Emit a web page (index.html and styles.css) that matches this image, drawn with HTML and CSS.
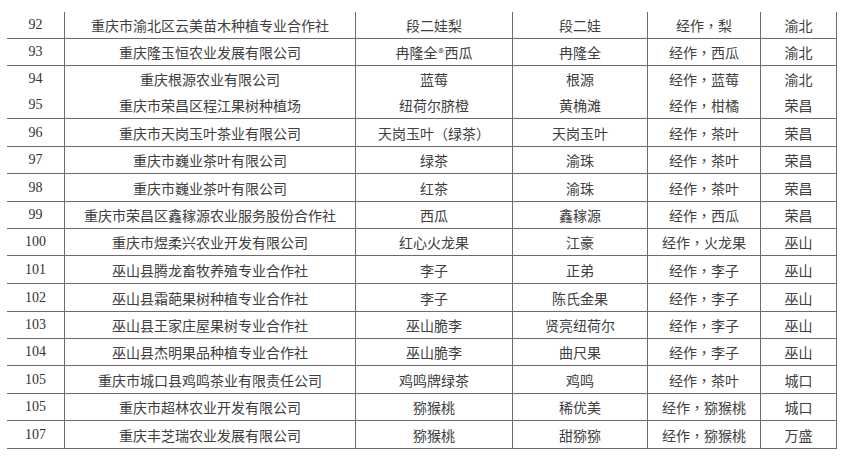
FILE: index.html
```html
<!DOCTYPE html>
<html lang="zh-CN">
<head>
<meta charset="utf-8">
<title>重庆市农产品品牌名录</title>
<link rel="stylesheet" href="styles.css">
</head>
<body>
<div class="sheet">
  <div class="row h27"><div class="c num">92</div><div class="c">重庆市渝北区云美苗木种植专业合作社</div><div class="c">段二娃梨</div><div class="c">段二娃</div><div class="c cat" lang="zh-Hant">经作，梨</div><div class="c">渝北</div></div>
  <div class="row h27"><div class="c num">93</div><div class="c">重庆隆玉恒农业发展有限公司</div><div class="c">冉隆全<span class="mark">®</span>西瓜</div><div class="c">冉隆全</div><div class="c cat" lang="zh-Hant">经作，西瓜</div><div class="c">渝北</div></div>
  <div class="row h26 nob"><div class="c num">94</div><div class="c">重庆根源农业有限公司</div><div class="c">蓝莓</div><div class="c">根源</div><div class="c cat" lang="zh-Hant">经作，蓝莓</div><div class="c">渝北</div></div>
  <div class="row h27"><div class="c num">95</div><div class="c">重庆市荣昌区程江果树种植场</div><div class="c">纽荷尔脐橙</div><div class="c">黄桷滩</div><div class="c cat" lang="zh-Hant">经作，柑橘</div><div class="c">荣昌</div></div>
  <div class="row h28"><div class="c num">96</div><div class="c">重庆市天岗玉叶茶业有限公司</div><div class="c">天岗玉叶（绿茶）</div><div class="c">天岗玉叶</div><div class="c cat" lang="zh-Hant">经作，茶叶</div><div class="c">荣昌</div></div>
  <div class="row h27"><div class="c num">97</div><div class="c">重庆市巍业茶叶有限公司</div><div class="c">绿茶</div><div class="c">渝珠</div><div class="c cat" lang="zh-Hant">经作，茶叶</div><div class="c">荣昌</div></div>
  <div class="row h28"><div class="c num">98</div><div class="c">重庆市巍业茶叶有限公司</div><div class="c">红茶</div><div class="c">渝珠</div><div class="c cat" lang="zh-Hant">经作，茶叶</div><div class="c">荣昌</div></div>
  <div class="row h27"><div class="c num">99</div><div class="c">重庆市荣昌区鑫稼源农业服务股份合作社</div><div class="c">西瓜</div><div class="c">鑫稼源</div><div class="c cat" lang="zh-Hant">经作，西瓜</div><div class="c">荣昌</div></div>
  <div class="row h27"><div class="c num">100</div><div class="c">重庆市煜柔兴农业开发有限公司</div><div class="c">红心火龙果</div><div class="c">江豪</div><div class="c cat" lang="zh-Hant">经作，火龙果</div><div class="c">巫山</div></div>
  <div class="row h28"><div class="c num">101</div><div class="c">巫山县腾龙畜牧养殖专业合作社</div><div class="c">李子</div><div class="c">正弟</div><div class="c cat" lang="zh-Hant">经作，李子</div><div class="c">巫山</div></div>
  <div class="row h28"><div class="c num">102</div><div class="c">巫山县霜葩果树种植专业合作社</div><div class="c">李子</div><div class="c">陈氏金果</div><div class="c cat" lang="zh-Hant">经作，李子</div><div class="c">巫山</div></div>
  <div class="row h27"><div class="c num">103</div><div class="c">巫山县王家庄屋果树专业合作社</div><div class="c">巫山脆李</div><div class="c">贤亮纽荷尔</div><div class="c cat" lang="zh-Hant">经作，李子</div><div class="c">巫山</div></div>
  <div class="row h27"><div class="c num">104</div><div class="c">巫山县杰明果品种植专业合作社</div><div class="c">巫山脆李</div><div class="c">曲尺果</div><div class="c cat" lang="zh-Hant">经作，李子</div><div class="c">巫山</div></div>
  <div class="row h28"><div class="c num">105</div><div class="c">重庆市城口县鸡鸣茶业有限责任公司</div><div class="c">鸡鸣牌绿茶</div><div class="c">鸡鸣</div><div class="c cat" lang="zh-Hant">经作，茶叶</div><div class="c">城口</div></div>
  <div class="row h27"><div class="c num">105</div><div class="c">重庆市超林农业开发有限公司</div><div class="c">猕猴桃</div><div class="c">稀优美</div><div class="c cat" lang="zh-Hant">经作，猕猴桃</div><div class="c">城口</div></div>
  <div class="row h28"><div class="c num">107</div><div class="c">重庆丰芝瑞农业发展有限公司</div><div class="c">猕猴桃</div><div class="c">甜猕猕</div><div class="c cat" lang="zh-Hant">经作，猕猴桃</div><div class="c">万盛</div></div>
</div>
</body>
</html>
```

FILE: styles.css
```css
html, body {
  margin: 0;
  padding: 0;
  background: #ffffff;
}

body {
  font-family: "Noto Sans CJK SC", "Noto Sans", sans-serif;
  font-size: 14px;
  color: #404040;
}

.sheet {
  width: 830px;
  margin: 12px 0 0 7px;
}

.row {
  display: grid;
  grid-template-columns: 58px 291px 157px 135px 113px 76px;
  box-sizing: border-box;
  border-bottom: 1px solid #6c6c6c;
}

.row.nob {
  border-bottom: none;
}

.h26 { height: 26px; }
.h27 { height: 27px; }
.h28 { height: 28px; }

.c {
  box-sizing: border-box;
  border-right: 1px solid #6c6c6c;
  display: flex;
  align-items: center;
  justify-content: center;
  white-space: nowrap;
  line-height: 1;
}

/* category column: centred full-width comma as in the source document */
.cat {
  font-family: "Noto Sans CJK TC", "Noto Sans CJK SC", sans-serif;
}

.mark {
  font-size: 11px;
  margin: 0 1px;
}

.num {
  font-family: "Liberation Serif", "DejaVu Serif", serif;
  font-size: 14px;
  color: #333333;
}
```
